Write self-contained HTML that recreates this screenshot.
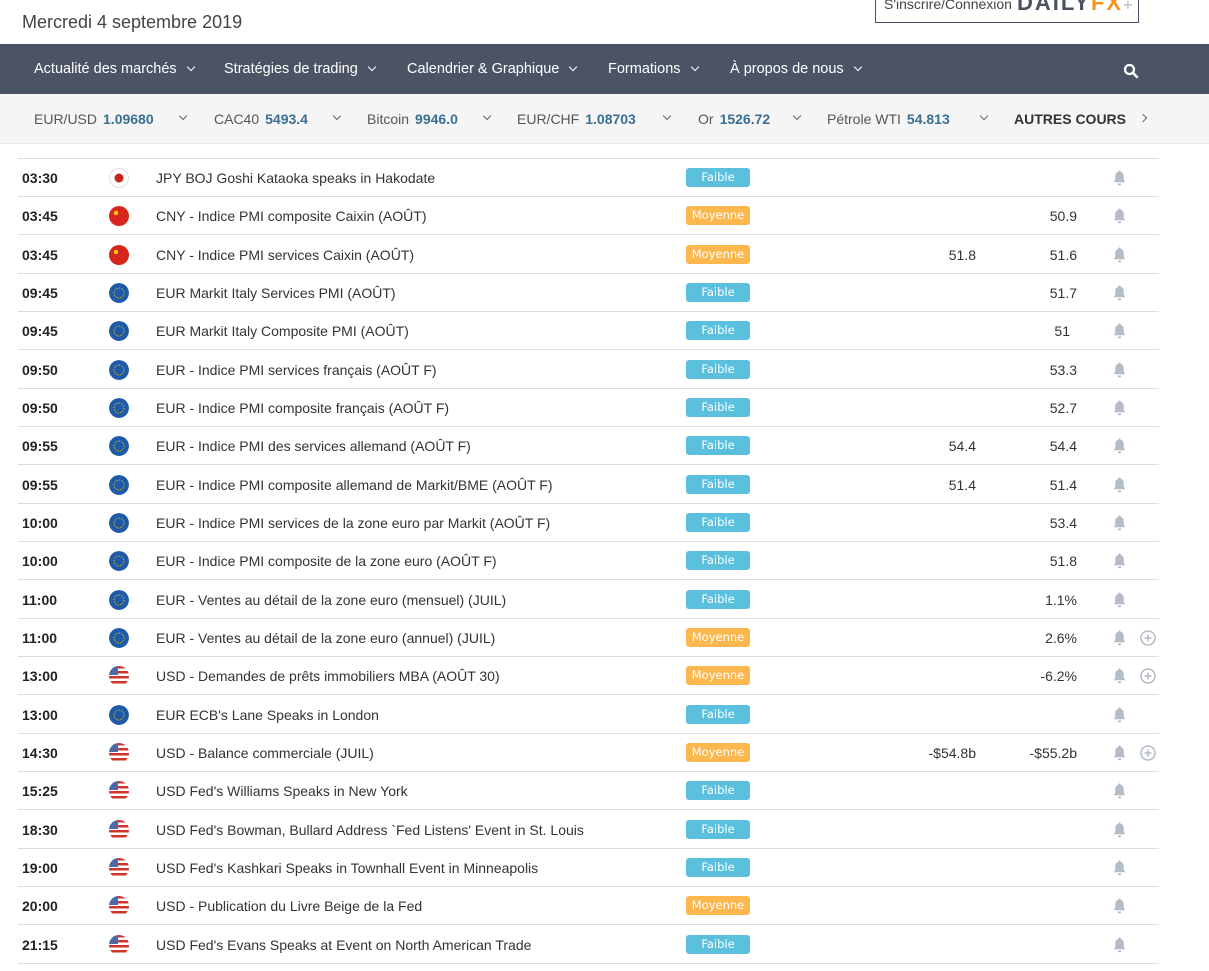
<!DOCTYPE html>
<html><head><meta charset="utf-8"><style>
*{margin:0;padding:0;box-sizing:border-box}
body{width:1209px;height:971px;overflow:hidden;background:#fff;font-family:"Liberation Sans",Arial,sans-serif;color:#333;position:relative}
.date{position:absolute;left:22px;top:12px;font-size:18px;color:#444}
.logo{position:absolute;left:875px;top:-8px;width:264px;height:31px;border:1px solid #4a5160;border-top:none;font-size:14px;color:#444;padding:4px 0 0 8px;overflow:hidden}
.logo b{font-size:22px;letter-spacing:2px;color:#4a5160;position:absolute;left:141px;top:-2px;font-weight:900}
.logo b i{color:#f7941d;font-style:normal}
.logo b s{color:#ccc;text-decoration:none;font-size:16px}
.nav{position:absolute;left:0;top:44px;width:1209px;height:50px;background:#4b5464;color:#fff;font-size:14.5px}
.nav span{position:absolute;top:17px}
.nav span:after{content:"";display:inline-block;width:5px;height:5px;border-right:1.5px solid #fff;border-bottom:1.5px solid #fff;transform:rotate(45deg);margin-left:11px;position:relative;top:-3px}
.tick{position:absolute;left:0;top:94px;width:1209px;height:50px;background:#f5f5f5;font-size:14px;color:#555;border-bottom:1px solid #e6e6e6}
.tick span{position:absolute;top:17px}
.tick span b{color:#3a6f94;margin-left:6px}
.tick .c{position:absolute;top:19px;width:6px;height:6px;border-right:1.5px solid #666;border-bottom:1.5px solid #666;transform:rotate(45deg)}
.row{position:absolute;left:18px;width:1141px;height:38px;border-bottom:1px solid #ddd;font-size:14px}
.row>*{position:absolute}
.t{left:4px;top:11px;font-weight:bold;color:#222}
.f{left:91px;top:9px;width:20px;height:20px;border-radius:50%;overflow:hidden}
.n{left:138px;top:11px;color:#333}
.bd{left:668px;top:9px;width:64px;height:19px;border-radius:3px;color:#fff;font-family:"DejaVu Sans",sans-serif;font-size:11.5px;text-align:center;line-height:19px}
.F{background:#5bc0de}.M{background:#fdb74f}
.a{right:183px;top:11px}.p{right:82px;top:11px}
.bl{left:1094px;top:11px}
.pl{left:1122px;top:11px}
</style></head><body>
<div class="date">Mercredi 4 septembre 2019</div>
<div class="logo">S'inscrire/Connexion<b>DAILY<i>FX</i><s>+</s></b></div>
<div class="nav">
<span style="left:34px">Actualité des marchés</span>
<span style="left:224px">Stratégies de trading</span>
<span style="left:407px">Calendrier &amp; Graphique</span>
<span style="left:608px">Formations</span>
<span style="left:730px">À propos de nous</span>
<svg style="position:absolute;left:1123px;top:19px" width="16" height="16" viewBox="0 0 16 16"><circle cx="6.5" cy="6.5" r="4.5" fill="none" stroke="#fff" stroke-width="2.2"/><path d="M10 10l4 4" stroke="#fff" stroke-width="2.6" stroke-linecap="round"/></svg>
</div>
<div class="tick">
<span style="left:34px">EUR/USD<b>1.09680</b></span><i class="c" style="left:180px"></i>
<span style="left:214px">CAC40<b>5493.4</b></span><i class="c" style="left:334px"></i>
<span style="left:367px">Bitcoin<b>9946.0</b></span><i class="c" style="left:484px"></i>
<span style="left:517px">EUR/CHF<b>1.08703</b></span><i class="c" style="left:664px"></i>
<span style="left:698px">Or<b>1526.72</b></span><i class="c" style="left:794px"></i>
<span style="left:827px">Pétrole WTI<b>54.813</b></span><i class="c" style="left:981px"></i>
<span style="left:1014px;font-weight:bold;color:#333">AUTRES COURS</span>
<i class="c" style="left:1140px;top:21px;transform:rotate(-45deg)"></i>
</div>
<svg width="0" height="0" style="position:absolute"><defs>
<symbol id="eu" viewBox="0 0 20 20"><circle cx="10" cy="10" r="10" fill="#1e5aa8"/><circle cx="10" cy="10" r="5" fill="none" stroke="#e8c400" stroke-width="1" stroke-dasharray="1.2 1.4"/></symbol>
<symbol id="us" viewBox="0 0 20 20"><rect width="20" height="20" fill="#fff"/><g fill="#d0342c"><rect y="0" width="20" height="2.5"/><rect y="5" width="20" height="2.5"/><rect y="10" width="20" height="2.5"/><rect y="15" width="20" height="2.5"/></g><rect width="9" height="9" fill="#4a6aa8"/></symbol>
<symbol id="cn" viewBox="0 0 20 20"><rect width="20" height="20" fill="#d7261e"/><circle cx="7" cy="7" r="2.2" fill="#f8d000"/></symbol>
<symbol id="jp" viewBox="0 0 20 20"><circle cx="10" cy="10" r="9.5" fill="#fff" stroke="#ddd"/><circle cx="10" cy="10" r="4.5" fill="#c8231e"/></symbol>
<symbol id="bell" viewBox="0 0 14 15"><path d="M7 1.5c-2.6 0-4 2-4 4.5v3.2L1.6 11.5h10.8L11 9.2V6c0-2.5-1.4-4.5-4-4.5z" fill="#b4bcc8"/><circle cx="7" cy="1.3" r="1" fill="#b4bcc8"/><path d="M5.3 12.6a1.7 1.7 0 0 0 3.4 0z" fill="#b4bcc8"/></symbol>
<symbol id="plus" viewBox="0 0 16 16"><circle cx="8" cy="8" r="7" fill="none" stroke="#b4bcc8" stroke-width="1.5"/><path d="M8 4.5v7M4.5 8h7" stroke="#b4bcc8" stroke-width="1.5"/></symbol>
</defs></svg>
<div class="row" style="top:121px;border-bottom:1px solid #ddd"></div>

<div class="row" style="top:159px"><span class="t">03:30</span><svg class="f"><use href="#jp"/></svg><span class="n">JPY BOJ Goshi Kataoka speaks in Hakodate</span><span class="bd F">Faible</span><svg class="bl" width="15" height="16"><use href="#bell"/></svg></div>
<div class="row" style="top:197px"><span class="t">03:45</span><svg class="f"><use href="#cn"/></svg><span class="n">CNY - Indice PMI composite Caixin (AOÛT)</span><span class="bd M">Moyenne</span><span class="p">50.9</span><svg class="bl" width="15" height="16"><use href="#bell"/></svg></div>
<div class="row" style="top:236px"><span class="t">03:45</span><svg class="f"><use href="#cn"/></svg><span class="n">CNY - Indice PMI services Caixin (AOÛT)</span><span class="bd M">Moyenne</span><span class="a">51.8</span><span class="p">51.6</span><svg class="bl" width="15" height="16"><use href="#bell"/></svg></div>
<div class="row" style="top:274px"><span class="t">09:45</span><svg class="f"><use href="#eu"/></svg><span class="n">EUR Markit Italy Services PMI (AOÛT)</span><span class="bd F">Faible</span><span class="p">51.7</span><svg class="bl" width="15" height="16"><use href="#bell"/></svg></div>
<div class="row" style="top:312px"><span class="t">09:45</span><svg class="f"><use href="#eu"/></svg><span class="n">EUR Markit Italy Composite PMI (AOÛT)</span><span class="bd F">Faible</span><span class="p" style="right:89px">51</span><svg class="bl" width="15" height="16"><use href="#bell"/></svg></div>
<div class="row" style="top:351px"><span class="t">09:50</span><svg class="f"><use href="#eu"/></svg><span class="n">EUR - Indice PMI services français (AOÛT F)</span><span class="bd F">Faible</span><span class="p">53.3</span><svg class="bl" width="15" height="16"><use href="#bell"/></svg></div>
<div class="row" style="top:389px"><span class="t">09:50</span><svg class="f"><use href="#eu"/></svg><span class="n">EUR - Indice PMI composite français (AOÛT F)</span><span class="bd F">Faible</span><span class="p">52.7</span><svg class="bl" width="15" height="16"><use href="#bell"/></svg></div>
<div class="row" style="top:427px"><span class="t">09:55</span><svg class="f"><use href="#eu"/></svg><span class="n">EUR - Indice PMI des services allemand (AOÛT F)</span><span class="bd F">Faible</span><span class="a">54.4</span><span class="p">54.4</span><svg class="bl" width="15" height="16"><use href="#bell"/></svg></div>
<div class="row" style="top:466px"><span class="t">09:55</span><svg class="f"><use href="#eu"/></svg><span class="n">EUR - Indice PMI composite allemand de Markit/BME (AOÛT F)</span><span class="bd F">Faible</span><span class="a">51.4</span><span class="p">51.4</span><svg class="bl" width="15" height="16"><use href="#bell"/></svg></div>
<div class="row" style="top:504px"><span class="t">10:00</span><svg class="f"><use href="#eu"/></svg><span class="n">EUR - Indice PMI services de la zone euro par Markit (AOÛT F)</span><span class="bd F">Faible</span><span class="p">53.4</span><svg class="bl" width="15" height="16"><use href="#bell"/></svg></div>
<div class="row" style="top:542px"><span class="t">10:00</span><svg class="f"><use href="#eu"/></svg><span class="n">EUR - Indice PMI composite de la zone euro (AOÛT F)</span><span class="bd F">Faible</span><span class="p">51.8</span><svg class="bl" width="15" height="16"><use href="#bell"/></svg></div>
<div class="row" style="top:581px"><span class="t">11:00</span><svg class="f"><use href="#eu"/></svg><span class="n">EUR - Ventes au détail de la zone euro (mensuel) (JUIL)</span><span class="bd F">Faible</span><span class="p">1.1%</span><svg class="bl" width="15" height="16"><use href="#bell"/></svg></div>
<div class="row" style="top:619px"><span class="t">11:00</span><svg class="f"><use href="#eu"/></svg><span class="n">EUR - Ventes au détail de la zone euro (annuel) (JUIL)</span><span class="bd M">Moyenne</span><span class="p">2.6%</span><svg class="bl" width="15" height="16"><use href="#bell"/></svg><svg class="pl" width="16" height="16"><use href="#plus"/></svg></div>
<div class="row" style="top:657px"><span class="t">13:00</span><svg class="f"><use href="#us"/></svg><span class="n">USD - Demandes de prêts immobiliers MBA (AOÛT 30)</span><span class="bd M">Moyenne</span><span class="p">-6.2%</span><svg class="bl" width="15" height="16"><use href="#bell"/></svg><svg class="pl" width="16" height="16"><use href="#plus"/></svg></div>
<div class="row" style="top:696px"><span class="t">13:00</span><svg class="f"><use href="#eu"/></svg><span class="n">EUR ECB's Lane Speaks in London</span><span class="bd F">Faible</span><svg class="bl" width="15" height="16"><use href="#bell"/></svg></div>
<div class="row" style="top:734px"><span class="t">14:30</span><svg class="f"><use href="#us"/></svg><span class="n">USD - Balance commerciale (JUIL)</span><span class="bd M">Moyenne</span><span class="a">-$54.8b</span><span class="p">-$55.2b</span><svg class="bl" width="15" height="16"><use href="#bell"/></svg><svg class="pl" width="16" height="16"><use href="#plus"/></svg></div>
<div class="row" style="top:772px"><span class="t">15:25</span><svg class="f"><use href="#us"/></svg><span class="n">USD Fed's Williams Speaks in New York</span><span class="bd F">Faible</span><svg class="bl" width="15" height="16"><use href="#bell"/></svg></div>
<div class="row" style="top:811px"><span class="t">18:30</span><svg class="f"><use href="#us"/></svg><span class="n">USD Fed's Bowman, Bullard Address `Fed Listens' Event in St. Louis</span><span class="bd F">Faible</span><svg class="bl" width="15" height="16"><use href="#bell"/></svg></div>
<div class="row" style="top:849px"><span class="t">19:00</span><svg class="f"><use href="#us"/></svg><span class="n">USD Fed's Kashkari Speaks in Townhall Event in Minneapolis</span><span class="bd F">Faible</span><svg class="bl" width="15" height="16"><use href="#bell"/></svg></div>
<div class="row" style="top:887px"><span class="t">20:00</span><svg class="f"><use href="#us"/></svg><span class="n">USD - Publication du Livre Beige de la Fed</span><span class="bd M">Moyenne</span><svg class="bl" width="15" height="16"><use href="#bell"/></svg></div>
<div class="row" style="top:926px"><span class="t">21:15</span><svg class="f"><use href="#us"/></svg><span class="n">USD Fed's Evans Speaks at Event on North American Trade</span><span class="bd F">Faible</span><svg class="bl" width="15" height="16"><use href="#bell"/></svg></div>
</body></html>
